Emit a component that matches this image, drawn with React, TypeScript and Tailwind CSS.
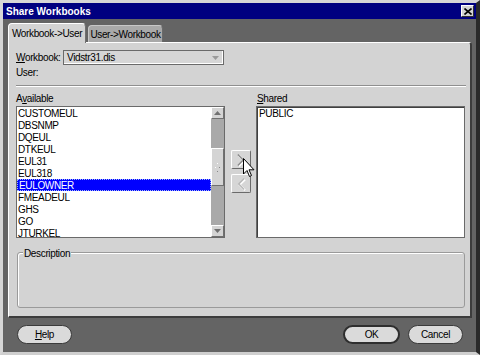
const font = { fontFamily: '"Liberation Sans", Arial, sans-serif' };

const available = [
  "CUSTOMEUL",
  "DBSNMP",
  "DQEUL",
  "DTKEUL",
  "EUL31",
  "EUL318",
  "EULOWNER",
  "FMEADEUL",
  "GHS",
  "GO",
  "JTURKEL",
];

function Scrollbar() {
  return (
    <div className="flex w-[13px] shrink-0 flex-col bg-[#a9a9a9]">
      <div className="flex h-[12px] items-center justify-center border-t border-l border-white border-r border-b border-r-[#707070] border-b-[#707070] bg-[#d4d4d4]">
        <svg width="7" height="4" viewBox="0 0 7 4">
          <path d="M3.5 0 L7 4 L0 4 Z" fill="#707070" />
        </svg>
      </div>
      <div className="h-[29px]" />
      <div className="flex h-[38px] flex-col items-center justify-center gap-[3px] border-t border-l border-white border-r border-b border-r-[#707070] border-b-[#707070] bg-[#d4d4d4]">
        <div className="flex gap-[3px]">
          <span className="h-[1px] w-[1px] bg-white" />
        </div>
        <div className="flex gap-[3px]">
          <span className="h-[1px] w-[1px] bg-white" />
          <span className="h-[1px] w-[1px] bg-[#888]" />
        </div>
        <div className="flex gap-[3px]">
          <span className="h-[1px] w-[1px] bg-[#888]" />
        </div>
      </div>
      <div className="flex-1" />
      <div className="flex h-[12px] items-center justify-center border-t border-l border-white border-r border-b border-r-[#707070] border-b-[#707070] bg-[#d4d4d4]">
        <svg width="7" height="4" viewBox="0 0 7 4">
          <path d="M0 0 L7 0 L3.5 4 Z" fill="#707070" />
        </svg>
      </div>
    </div>
  );
}

function MoveButton({ dir, enabled }: { dir: "right" | "left"; enabled: boolean }) {
  const d = dir === "right" ? "M6 4 L12 10 L6 16" : "M13 4 L7 10 L13 16";
  return (
    <div className="flex h-[19px] w-[20px] items-center justify-center rounded-[2px] border-t border-l border-white border-r border-b border-r-[#6a6a6a] border-b-[#6a6a6a] bg-[#d6d6d6]">
      <svg width="18" height="18" viewBox="0 0 19 20">
        <path d={d} fill="none" stroke="#ffffff" strokeWidth="2.2" transform="translate(1,1)" />
        <path d={d} fill="none" stroke={enabled ? "#8a8a8a" : "#b8b8b8"} strokeWidth="1.6" />
      </svg>
    </div>
  );
}

function PillButton({ children, strong, width }: { children: React.ReactNode; strong?: boolean; width: string }) {
  return (
    <div
      className={`flex h-[19px] items-center justify-center rounded-full bg-[#dadada] text-[10px] text-black ${width} ${
        strong ? "border-[2px] border-[#2e2e2e]" : "border border-[#3a3a3a]"
      }`}
    >
      {children}
    </div>
  );
}

export default function App() {
  return (
    <div
      style={font}
      className="relative flex h-[355px] w-[480px] flex-col overflow-hidden border-t-[3px] border-l-[3px] border-r-[4px] border-b-[3px] border-t-[#d6d6d6] border-l-[#d6d6d6] border-r-[#2a2a2a] border-b-[#cfcfcf] bg-[#646464] tracking-[-0.35px]"
    >
      {/* title bar */}
      <div className="flex h-[16px] shrink-0 items-center justify-between bg-[#000080] pl-[3px] pr-[2px]">
        <span className="text-[10px] font-bold tracking-[0px] text-white">Share Workbooks</span>
        <div className="flex h-[12px] w-[13px] items-center justify-center border-t border-l border-white border-r border-b border-r-[#303030] border-b-[#303030] bg-[#d4d4d4]">
          <svg width="8" height="7" viewBox="0 0 8 7">
            <path d="M0.5 0.5 L7.5 6.5 M7.5 0.5 L0.5 6.5" stroke="#000" strokeWidth="1.6" />
          </svg>
        </div>
      </div>

      <div className="flex flex-1 flex-col pl-[5px] pr-[4px] pt-[4px]">
        {/* tabs */}
        <div className="flex h-[19px] items-end gap-[2px]">
          <div className="relative z-10 -mb-[1px] flex h-[20px] w-[78px] items-center justify-center whitespace-nowrap rounded-t-[4px] border-t border-l border-white border-r border-r-[#707070] bg-[#d3d3d3] text-[10px] text-black">
            Workbook-&gt;User
          </div>
          <div className="flex h-[17px] w-[75px] items-center justify-center whitespace-nowrap rounded-t-[4px] border-t border-l border-[#c8c8c8] border-r border-r-[#6a6a6a] bg-[#a9a9a9] text-[10px] text-black">
            User-&gt;Workbook
          </div>
        </div>

        {/* panel */}
        <div className="flex h-[276px] w-[464px] flex-col rounded-tr-[3px] border-t border-l border-white border-r-2 border-b-2 border-r-[#3c3c3c] border-b-[#3c3c3c] bg-[#d3d3d3] pl-[7px] pr-[5px] pt-[7px]">
          <div className="flex h-[15px] items-center text-[10px] text-black">
            <span className="w-[47px]">
              <span className="underline">W</span>orkbook:
            </span>
            <div className="flex h-[15px] w-[161px] items-center justify-between border border-[#6a6a6a] bg-[#d6d6d6] pl-[3px] pr-[4px] shadow-[inset_-1px_-1px_0_#ffffff]">
              <span>Vidstr31.dis</span>
              <svg width="7" height="4" viewBox="0 0 7 4">
                <path d="M0 0 L7 0 L3.5 4 Z" fill="#9a9a9a" />
              </svg>
            </div>
          </div>
          <div className="mt-[1px] flex h-[12px] items-center text-[10px] text-black">User:</div>

          <div className="mt-[7px] h-[2px] w-[450px] border-t border-[#8f8f8f] border-b border-b-white" />

          <div className="mt-[5px] flex">
            <div className="flex w-[209px] flex-col">
              <div className="h-[14px] pt-[1px] text-[10px] leading-[12px] text-black">
                A<span className="underline">v</span>ailable
              </div>
              <div className="flex h-[132px] border border-[#6a6a6a] bg-white">
                <div className="flex-1 overflow-hidden">
                  {available.map((name) => (
                    <div
                      key={name}
                      className={`flex h-[12px] items-center pl-[1px] text-[10px] ${
                        name === "EULOWNER"
                          ? "border border-dotted border-[#9fb6ff] bg-[#0000ff] text-white"
                          : "text-black"
                      }`}
                    >
                      {name}
                    </div>
                  ))}
                </div>
                <Scrollbar />
              </div>
            </div>

            <div className="ml-[6px] flex w-[20px] flex-col gap-[5px] pt-[58px]">
              <MoveButton dir="right" enabled />
              <MoveButton dir="left" enabled={false} />
            </div>

            <div className="ml-[5px] flex w-[209px] flex-col">
              <div className="h-[14px] pl-[1px] pt-[1px] text-[10px] leading-[12px] text-black">
                <span className="underline">S</span>hared
              </div>
              <div className="h-[132px] border border-[#6a6a6a] bg-white shadow-[inset_1px_1px_0_#404040]">
                <div className="flex h-[12px] items-center pl-[2px] pt-[1px] text-[10px] text-black">PUBLIC</div>
              </div>
            </div>
          </div>

          <div className="relative ml-[1px] mt-[14px] h-[56px] w-[448px] rounded-[3px] border border-[#9a9a9a] shadow-[inset_1px_1px_0_#ffffff]">
            <span className="absolute -top-[7px] left-[5px] bg-[#d3d3d3] px-[1px] text-[10px] text-black">Description</span>
          </div>
        </div>

        {/* bottom buttons */}
        <div className="mt-[7px] flex items-center pl-[9px] pr-[9px]">
          <PillButton width="w-[55px]">
            <span className="underline">H</span>elp
          </PillButton>
          <div className="flex-1" />
          <PillButton width="w-[57px]" strong>
            OK
          </PillButton>
          <div className="w-[8px]" />
          <PillButton width="w-[55px]">Cancel</PillButton>
        </div>
      </div>

      {/* mouse pointer */}
      <svg className="absolute left-[240px] top-[155px]" width="13" height="21" viewBox="0 0 13 21">
        <path d="M0.5 0.5 L0.5 16 L4 12.5 L6.5 18.5 L8.5 17.5 L6 11.8 L11 11.8 Z" fill="#ffffff" stroke="#000000" strokeWidth="1" />
      </svg>
    </div>
  );
}
